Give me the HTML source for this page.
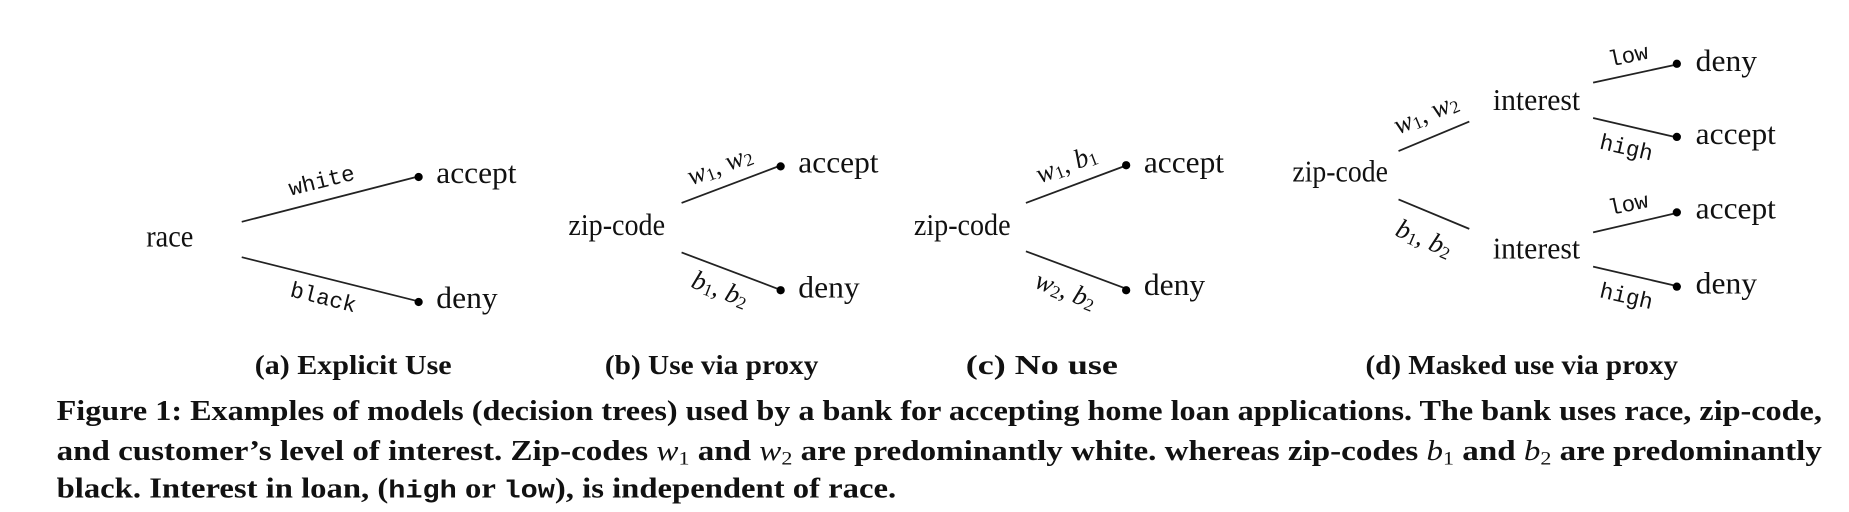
<!DOCTYPE html>
<html><head><meta charset="utf-8"><style>
html,body{margin:0;padding:0;background:#fff;}
svg{display:block;}
.t{font-family:"Liberation Serif",serif;font-size:26px;fill:#111;}
.m{font-family:"Liberation Mono",monospace;font-size:19px;fill:#111;}
.i{font-family:"Liberation Serif",serif;font-style:italic;font-size:23px;fill:#111;}
.s{font-size:15px;}
.b{font-family:"Liberation Serif",serif;font-weight:bold;fill:#111;}
line{stroke:#222;stroke-width:1.5;}
</style></head><body>
<svg width="1849" height="512" viewBox="0 0 1568 434" xmlns="http://www.w3.org/2000/svg">
<!-- (a) -->
<text class="t" x="124" y="209" textLength="40" lengthAdjust="spacingAndGlyphs">race</text>
<line x1="205" y1="188" x2="353" y2="150"/>
<line x1="205" y1="218" x2="353" y2="255"/>
<circle cx="355" cy="150" r="3.5"/><circle cx="355" cy="256" r="3.5"/>
<text class="t" x="370" y="155" textLength="68" lengthAdjust="spacingAndGlyphs">accept</text>
<text class="t" x="370" y="261" textLength="52" lengthAdjust="spacingAndGlyphs">deny</text>
<text class="m" text-anchor="middle" dominant-baseline="middle" transform="translate(273,154) rotate(-14)">white</text>
<text class="m" text-anchor="middle" dominant-baseline="middle" transform="translate(274,253) rotate(14)">black</text>
<!-- (b) -->
<text class="t" x="482" y="199" textLength="82" lengthAdjust="spacingAndGlyphs">zip-code</text>
<line x1="578" y1="172" x2="660" y2="141"/>
<line x1="578" y1="214" x2="660" y2="245"/>
<circle cx="662" cy="141" r="3.5"/><circle cx="662" cy="246" r="3.5"/>
<text class="t" x="677" y="146" textLength="68" lengthAdjust="spacingAndGlyphs">accept</text>
<text class="t" x="677" y="252" textLength="52" lengthAdjust="spacingAndGlyphs">deny</text>
<text class="i" text-anchor="middle" dominant-baseline="middle" transform="translate(611,142) rotate(-21)">w<tspan class="s" dy="4" font-style="normal">1</tspan><tspan dy="-4" font-style="normal">, </tspan>w<tspan class="s" dy="4" font-style="normal">2</tspan></text>
<text class="i" text-anchor="middle" dominant-baseline="middle" transform="translate(610,247) rotate(21)">b<tspan class="s" dy="4" font-style="normal">1</tspan><tspan dy="-4" font-style="normal">, </tspan>b<tspan class="s" dy="4" font-style="normal">2</tspan></text>
<!-- (c) -->
<text class="t" x="775" y="199" textLength="82" lengthAdjust="spacingAndGlyphs">zip-code</text>
<line x1="870" y1="172" x2="953" y2="141"/>
<line x1="870" y1="213" x2="953" y2="244"/>
<circle cx="955" cy="140" r="3.5"/><circle cx="955" cy="246" r="3.5"/>
<text class="t" x="970" y="146" textLength="68" lengthAdjust="spacingAndGlyphs">accept</text>
<text class="t" x="970" y="250" textLength="52" lengthAdjust="spacingAndGlyphs">deny</text>
<text class="i" text-anchor="middle" dominant-baseline="middle" transform="translate(905,141) rotate(-21)">w<tspan class="s" dy="4" font-style="normal">1</tspan><tspan dy="-4" font-style="normal">, </tspan>b<tspan class="s" dy="4" font-style="normal">1</tspan></text>
<text class="i" text-anchor="middle" dominant-baseline="middle" transform="translate(903,248) rotate(21)">w<tspan class="s" dy="4" font-style="normal">2</tspan><tspan dy="-4" font-style="normal">, </tspan>b<tspan class="s" dy="4" font-style="normal">2</tspan></text>
<!-- (d) -->
<text class="t" x="1096" y="154" textLength="81" lengthAdjust="spacingAndGlyphs">zip-code</text>
<line x1="1186" y1="128" x2="1246" y2="103"/>
<line x1="1186" y1="169" x2="1246" y2="194"/>
<text class="i" text-anchor="middle" dominant-baseline="middle" transform="translate(1210,98) rotate(-23)">w<tspan class="s" dy="4" font-style="normal">1</tspan><tspan dy="-4" font-style="normal">, </tspan>w<tspan class="s" dy="4" font-style="normal">2</tspan></text>
<text class="i" text-anchor="middle" dominant-baseline="middle" transform="translate(1207,204) rotate(23)">b<tspan class="s" dy="4" font-style="normal">1</tspan><tspan dy="-4" font-style="normal">, </tspan>b<tspan class="s" dy="4" font-style="normal">2</tspan></text>
<text class="t" x="1266" y="93" textLength="74" lengthAdjust="spacingAndGlyphs">interest</text>
<text class="t" x="1266" y="219" textLength="74" lengthAdjust="spacingAndGlyphs">interest</text>
<line x1="1351" y1="70" x2="1420" y2="55"/>
<line x1="1351" y1="100" x2="1420" y2="116"/>
<circle cx="1422" cy="54" r="3.5"/><circle cx="1422" cy="116" r="3.5"/>
<text class="t" x="1438" y="60" textLength="52" lengthAdjust="spacingAndGlyphs">deny</text>
<text class="t" x="1438" y="122" textLength="68" lengthAdjust="spacingAndGlyphs">accept</text>
<text class="m" text-anchor="middle" dominant-baseline="middle" transform="translate(1381,48) rotate(-12)">low</text>
<text class="m" text-anchor="middle" dominant-baseline="middle" transform="translate(1379,126) rotate(13)">high</text>
<line x1="1351" y1="197" x2="1420" y2="181"/>
<line x1="1351" y1="226" x2="1420" y2="242"/>
<circle cx="1422" cy="180" r="3.5"/><circle cx="1422" cy="243" r="3.5"/>
<text class="t" x="1438" y="185" textLength="68" lengthAdjust="spacingAndGlyphs">accept</text>
<text class="t" x="1438" y="249" textLength="52" lengthAdjust="spacingAndGlyphs">deny</text>
<text class="m" text-anchor="middle" dominant-baseline="middle" transform="translate(1381,174) rotate(-12)">low</text>
<text class="m" text-anchor="middle" dominant-baseline="middle" transform="translate(1379,252) rotate(13)">high</text>
<!-- subcaptions -->
<text class="b" font-size="23" x="216" y="317" textLength="167" lengthAdjust="spacingAndGlyphs">(a) Explicit Use</text>
<text class="b" font-size="23" x="513" y="317" textLength="181" lengthAdjust="spacingAndGlyphs">(b) Use via proxy</text>
<text class="b" font-size="23" x="819" y="317" textLength="129" lengthAdjust="spacingAndGlyphs">(c) No use</text>
<text class="b" font-size="23" x="1158" y="317" textLength="265" lengthAdjust="spacingAndGlyphs">(d) Masked use via proxy</text>
<!-- caption -->
<text class="b" font-size="24" x="48" y="356" textLength="1497" lengthAdjust="spacingAndGlyphs">Figure 1: Examples of models (decision trees) used by a bank for accepting home loan applications. The bank uses race, zip-code,</text>
<text class="b" font-size="24" x="48" y="390" textLength="1497" lengthAdjust="spacingAndGlyphs">and customer’s level of interest. Zip-codes <tspan font-style="italic" font-weight="normal">w</tspan><tspan font-weight="normal" font-size="16" dy="4">1</tspan><tspan dy="-4"> and </tspan><tspan font-style="italic" font-weight="normal">w</tspan><tspan font-weight="normal" font-size="16" dy="4">2</tspan><tspan dy="-4"> are predominantly white. whereas zip-codes </tspan><tspan font-style="italic" font-weight="normal">b</tspan><tspan font-weight="normal" font-size="16" dy="4">1</tspan><tspan dy="-4"> and </tspan><tspan font-style="italic" font-weight="normal">b</tspan><tspan font-weight="normal" font-size="16" dy="4">2</tspan><tspan dy="-4"> are predominantly</tspan></text>
<text class="b" font-size="24" x="48" y="422" textLength="712" lengthAdjust="spacingAndGlyphs">black. Interest in loan, (<tspan font-family="Liberation Mono" font-size="21">high</tspan> or <tspan font-family="Liberation Mono" font-size="21">low</tspan>), is independent of race.</text>
</svg>
</body></html>
